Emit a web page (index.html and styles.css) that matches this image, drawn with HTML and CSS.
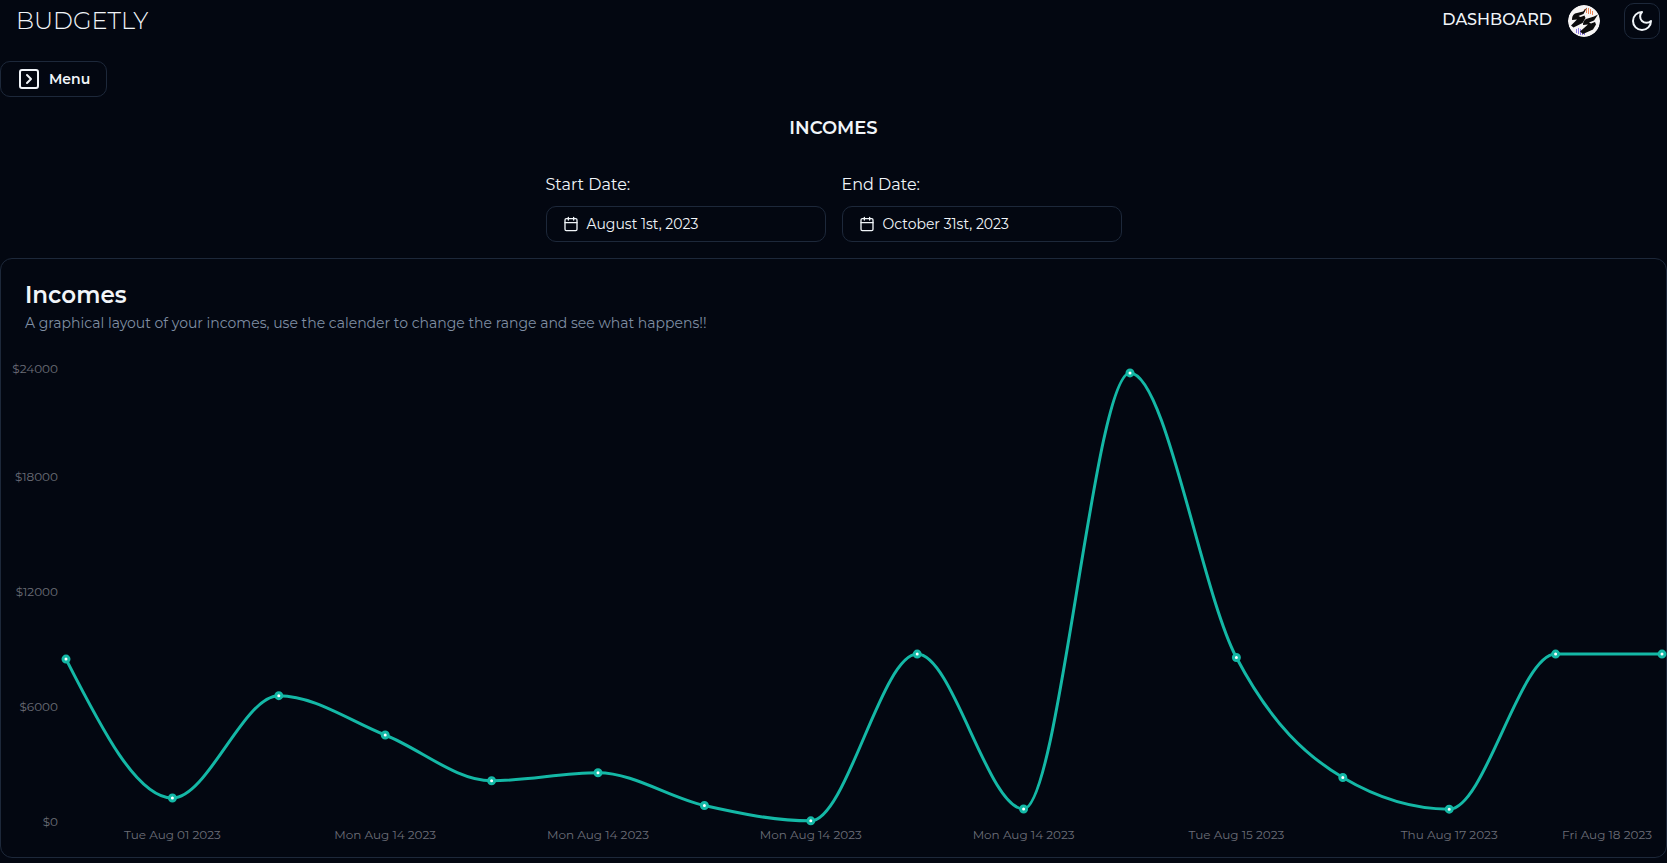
FILE: index.html
```html
<!DOCTYPE html>
<html lang="en">
<head>
<meta charset="utf-8">
<meta name="viewport" content="width=device-width, initial-scale=1">
<title>Budgetly</title>
<link rel="stylesheet" href="styles.css">
</head>
<body>
<header class="topbar">
  <a class="brand" href="#">BUDGETLY</a>
  <nav class="nav">
    <a class="nav-link" href="#">DASHBOARD</a>
    <a class="avatar" href="#" aria-label="Account">
      <svg viewBox="0 0 32 32" width="32" height="32" aria-hidden="true">
        <circle cx="16" cy="16" r="16" fill="#f7f5f5"/>
        <g stroke-width="1" fill="none">
          <path stroke="#ee8a5c" d="M18.500 3v5M20.500 3v6M22.500 4v5M24.500 6v4M16.500 4v3"/>
          <path stroke="#8f7ae6" d="M8.500 24v4M10.500 23v6M12.500 24v6M14.500 26v4M16.500 27v3"/>
        </g>
        <path fill="#0b0b0c" d="M19 2.500 15 6.500 7 8.500C4.500 10 4 12 4 15l5-.500L3 20.500l2.500 2 9-4.500 3-5-1-2.500-4 1.500-2-1 5-2z"/>
        <path fill="#0b0b0c" d="M30 9.500l-4 2-8 2.500c-2.500 1.500-3 3.500-3 6l5-.500-8 7 3 2.500 10-4.500 3-5-1-2.500-4 1.500-2-1 5-2z"/>
      </svg>
    </a>
    <button class="btn btn-icon" type="button" aria-label="Toggle theme">
      <svg class="icon" viewBox="0 0 24 24" width="24" height="24" aria-hidden="true"><path d="M12 3a6 6 0 0 0 9 9 9 9 0 1 1-9-9Z"/></svg>
    </button>
  </nav>
</header>
<main class="page">
  <button class="btn btn-menu" type="button">
    <svg class="icon" viewBox="0 0 24 24" width="24" height="24" aria-hidden="true"><rect x="3" y="3" width="18" height="18" rx="2"/><path d="m10 8 4 4-4 4"/></svg>
    Menu
  </button>
  <h1 class="page-title">INCOMES</h1>
  <div class="range">
    <div class="field">
      <label class="field-label" for="start">Start Date:</label>
      <button class="btn btn-date" id="start" type="button">
        <svg class="icon" viewBox="0 0 24 24" width="16" height="16" aria-hidden="true"><rect x="3" y="4" width="18" height="18" rx="2"/><path d="M16 2v4M8 2v4M3 10h18"/></svg>
        August 1st, 2023
      </button>
    </div>
    <div class="field">
      <label class="field-label" for="end">End Date:</label>
      <button class="btn btn-date" id="end" type="button">
        <svg class="icon" viewBox="0 0 24 24" width="16" height="16" aria-hidden="true"><rect x="3" y="4" width="18" height="18" rx="2"/><path d="M16 2v4M8 2v4M3 10h18"/></svg>
        October 31st, 2023
      </button>
    </div>
  </div>
  <section class="card">
    <div class="card-header">
      <h2 class="card-title">Incomes</h2>
      <p class="card-text">A graphical layout of your incomes, use the calender to change the range and see what happens!!</p>
    </div>
    <svg class="chart" id="chart" role="img" aria-label="Incomes over time"></svg>
  </section>
</main>
<script src="chart.js"></script>
</body>
</html>
```

FILE: styles.css
```css
* { box-sizing: border-box; }

body {
  margin: 0;
  background: #030711;
  color: #f1f5f9;
  font-family: Montserrat, Inter, "Open Sans", sans-serif;
  font-size: 16px;
  line-height: 24px;
}

a { color: inherit; text-decoration: none; }

.topbar {
  display: flex;
  align-items: center;
  justify-content: space-between;
  height: 42px;
  padding: 0 7px 0 16px;
}

.brand {
  font-size: 24px;
  font-weight: 300;
  line-height: 32px;
}

.nav { display: flex; align-items: center; }

.nav-link {
  margin-right: 16px;
  padding-bottom: 2px;
  font-size: 16px;
  font-weight: 500;
}

.avatar {
  display: block;
  width: 32px;
  height: 32px;
  margin-right: 24px;
  border-radius: 50%;
  overflow: hidden;
}

.avatar svg { display: block; }

.icon {
  flex: none;
  fill: none;
  stroke: currentColor;
  stroke-width: 2;
  stroke-linecap: round;
  stroke-linejoin: round;
}

.btn {
  display: flex;
  align-items: center;
  gap: 8px;
  height: 36px;
  padding: 0 16px;
  border: 1px solid #1d283a;
  border-radius: 10px;
  background: transparent;
  color: inherit;
  font: inherit;
  font-size: 14px;
  line-height: 20px;
}

.btn-icon {
  justify-content: center;
  width: 36px;
  padding: 0;
}

.btn-menu { font-weight: 600; }

.btn-date { width: 280px; }

.page { padding-top: 19px; }

.page-title {
  margin: 17px 0 31px;
  font-size: 18px;
  font-weight: 600;
  line-height: 28px;
  text-align: center;
}

.range {
  display: flex;
  flex-wrap: wrap;
  justify-content: center;
  gap: 16px;
}

.field { display: grid; gap: 9px; }

.field-label { font-size: 16px; font-weight: 400; }

.card {
  margin-top: 16px;
  border: 1px solid #1d283a;
  border-radius: 12px;
}

.card-header {
  display: grid;
  gap: 6px;
  padding: 24px;
}

.card-title {
  margin: 0;
  font-size: 23px;
  font-weight: 600;
  line-height: 24px;
}

.card-text {
  margin: 0;
  color: #7f8ea3;
  font-size: 14px;
  line-height: 20px;
}

.chart {
  display: block;
  width: 100%;
  height: 500px;
  overflow: visible;
}

.chart-line { fill: none; stroke: #14b8a6; stroke-width: 3; }
.chart-dot { fill: #ffffff; stroke: #14b8a6; stroke-width: 3; }
.chart-tick { fill: #6c6e78; font-size: 12px; }
```

FILE: chart.js
```js
const svg = document.getElementById("chart");
const values = [8500, 1250, 6590, 4540, 2150, 2570, 860, 60, 8760, 680, 23430, 8580, 2320, 670, 8760, 8760];
const dates = {
  1: "Tue Aug 01 2023", 3: "Mon Aug 14 2023", 5: "Mon Aug 14 2023", 7: "Mon Aug 14 2023",
  9: "Mon Aug 14 2023", 11: "Tue Aug 15 2023", 13: "Thu Aug 17 2023", 15: "Fri Aug 18 2023"
};
const max = 24000;
const plot = { left: 65, right: 4, top: 5, bottom: 465 };

function add(name, attrs, text) {
  const el = document.createElementNS("http://www.w3.org/2000/svg", name);
  for (const key in attrs) el.setAttribute(key, attrs[key]);
  if (text) el.textContent = text;
  svg.appendChild(el);
}

// Monotone cubic interpolation: the curve never overshoots its points.
function monotonePath(pts) {
  const n = pts.length;
  const slope = [];
  for (let i = 0; i < n - 1; i++) {
    slope.push((pts[i + 1].y - pts[i].y) / (pts[i + 1].x - pts[i].x));
  }
  const tangent = pts.map((p, i) => {
    if (i === 0 || i === n - 1) return 0;
    const a = slope[i - 1], b = slope[i];
    if (a * b <= 0) return 0;
    return Math.sign(a) * Math.min(Math.abs(a), Math.abs(b), Math.abs(a + b) / 4) * 2;
  });
  tangent[0] = (3 * slope[0] - tangent[1]) / 2;
  tangent[n - 1] = (3 * slope[n - 2] - tangent[n - 2]) / 2;
  let d = `M${pts[0].x},${pts[0].y}`;
  for (let i = 1; i < n; i++) {
    const p = pts[i - 1], q = pts[i], h = (q.x - p.x) / 3;
    d += `C${p.x + h},${p.y + h * tangent[i - 1]} ${q.x - h},${q.y - h * tangent[i]} ${q.x},${q.y}`;
  }
  return d;
}

function draw() {
  svg.replaceChildren();
  const width = svg.getBoundingClientRect().width;
  const step = (width - plot.left - plot.right) / (values.length - 1);
  const y = v => plot.bottom - v / max * (plot.bottom - plot.top);
  const pts = values.map((v, i) => ({ x: plot.left + i * step, y: y(v) }));

  for (let v = 0; v <= max; v += 6000) {
    add("text", { class: "chart-tick", x: plot.left - 8, y: Math.max(y(v), 12) + 4, "text-anchor": "end" }, "$" + v);
  }
  for (const i in dates) {
    const last = Number(i) === values.length - 1;
    add("text", {
      class: "chart-tick",
      x: last ? width - 14 : pts[i].x,
      y: plot.bottom + 17,
      "text-anchor": last ? "end" : "middle"
    }, dates[i]);
  }
  add("path", { class: "chart-line", d: monotonePath(pts) });
  pts.forEach(p => add("circle", { class: "chart-dot", cx: p.x, cy: p.y, r: 3 }));
}

draw();
window.addEventListener("resize", draw);
```
